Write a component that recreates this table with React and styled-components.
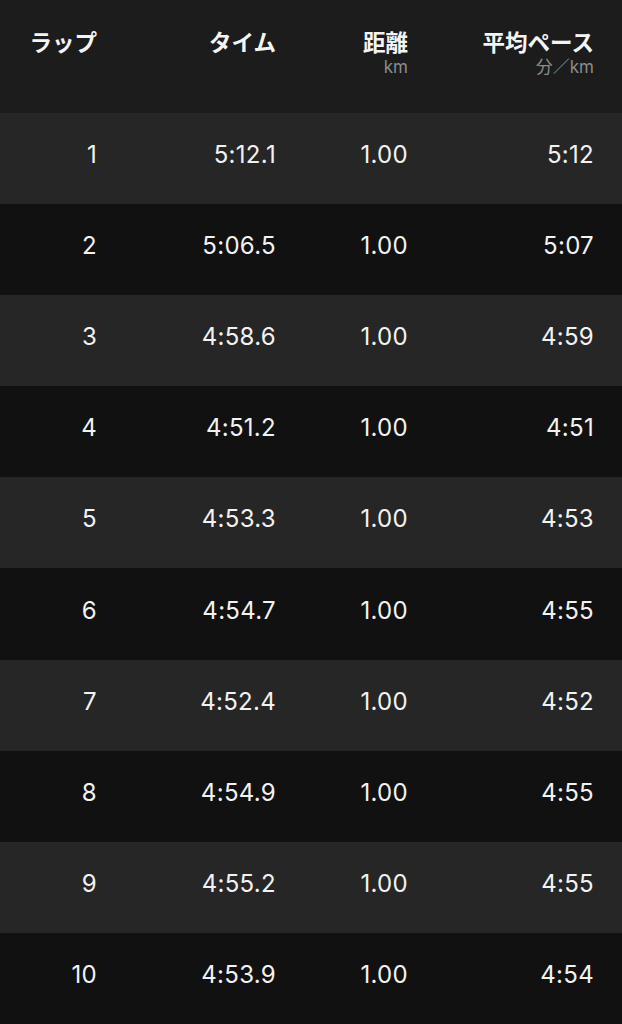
import React from "react";
import styled, { createGlobalStyle } from "styled-components";

const Global = createGlobalStyle`
  html, body { margin: 0; padding: 0; background: #111111; }
  body { font-family: Inter, "Noto Sans CJK JP", sans-serif; -webkit-font-smoothing: antialiased; }
`;

const Table = styled.div`
  width: 622px;
  height: 1024px;
  display: flex;
  flex-direction: column;
`;

const cols = `97px 179px 132px 186px`;

const Header = styled.div`
  display: grid;
  grid-template-columns: ${cols};
  height: 113px;
  flex: 0 0 113px;
  box-sizing: border-box;
  padding-top: 28px;
  background: #1c1c1c;
  align-items: start;
`;

const HeadCell = styled.div`
  display: flex;
  flex-direction: column;
  align-items: flex-end;
  text-align: right;
`;

const HeadTitle = styled.div`
  font-family: "Noto Sans CJK JP", sans-serif;
  font-weight: 700;
  font-size: 22.5px;
  line-height: 27px;
  color: #f4f4f4;
`;

const HeadUnit = styled.div`
  font-family: Inter, "Noto Sans CJK JP", sans-serif;
  font-size: 17px;
  line-height: 20px;
  color: #8c8c8c;
  margin-top: 2px;
`;

const Row = styled.div`
  display: grid;
  grid-template-columns: ${cols};
  flex: 1 1 0;
  box-sizing: border-box;
  padding-bottom: 7px;
  align-items: center;
  background: ${(p) => (p.$odd ? "#262626" : "#111111")};
`;

const Cell = styled.div`
  text-align: right;
  font-family: Inter, sans-serif;
  font-size: 24px;
  line-height: 28px;
  letter-spacing: 0.3px;
  color: #f2f2f2;
  font-weight: 400;
`;

const laps = [
  ["1", "5:12.1", "1.00", "5:12"],
  ["2", "5:06.5", "1.00", "5:07"],
  ["3", "4:58.6", "1.00", "4:59"],
  ["4", "4:51.2", "1.00", "4:51"],
  ["5", "4:53.3", "1.00", "4:53"],
  ["6", "4:54.7", "1.00", "4:55"],
  ["7", "4:52.4", "1.00", "4:52"],
  ["8", "4:54.9", "1.00", "4:55"],
  ["9", "4:55.2", "1.00", "4:55"],
  ["10", "4:53.9", "1.00", "4:54"],
];

export default function App() {
  return (
    <>
      <Global />
      <Table>
        <Header>
          <HeadCell><HeadTitle>ラップ</HeadTitle></HeadCell>
          <HeadCell><HeadTitle>タイム</HeadTitle></HeadCell>
          <HeadCell><HeadTitle>距離</HeadTitle><HeadUnit>km</HeadUnit></HeadCell>
          <HeadCell><HeadTitle>平均ペース</HeadTitle><HeadUnit>分／km</HeadUnit></HeadCell>
        </Header>
        {laps.map((l, i) => (
          <Row key={l[0]} $odd={i % 2 === 0}>
            {l.map((v, j) => (
              <Cell key={j}>{v}</Cell>
            ))}
          </Row>
        ))}
      </Table>
    </>
  );
}
